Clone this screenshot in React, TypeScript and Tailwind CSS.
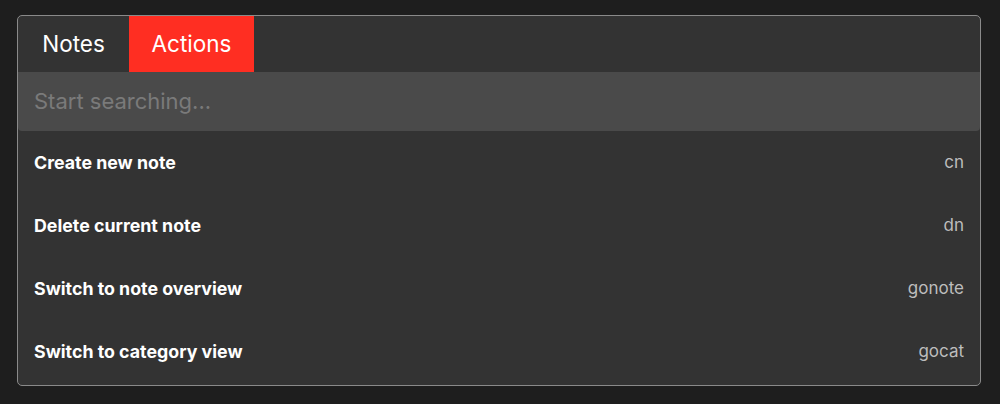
import React from 'react';

const actions = [
  { label: 'Create new note', shortcut: 'cn' },
  { label: 'Delete current note', shortcut: 'dn' },
  { label: 'Switch to note overview', shortcut: 'gonote' },
  { label: 'Switch to category view', shortcut: 'gocat' },
];

const App = () => {
  return (
    <div className="h-[404px] w-[1000px] bg-[#1e1e1e] pt-[15px] pl-[17px] font-['Inter','Liberation_Sans',sans-serif]">
      <div className="w-[964px] h-[371px] rounded-[5px] border border-[#8a8a8a] bg-[#333333] overflow-hidden flex flex-col">
        {/* Tabs */}
        <div className="flex h-[56px] shrink-0">
          <button className="w-[111px] text-[22.5px] text-white">Notes</button>
          <button className="w-[125px] text-[22.5px] text-white bg-[#ff2e22]">Actions</button>
        </div>

        {/* Search */}
        <div className="h-[59px] shrink-0 bg-[#4a4a4a] rounded-b-[4px] flex items-center px-[16px]">
          <input
            placeholder="Start searching..."
            className="w-full bg-transparent outline-none text-[22px] text-white placeholder:text-[#7a7a7a]"
          />
        </div>

        {/* Action list */}
        <div className="flex flex-col">
          {actions.map((a) => (
            <div key={a.shortcut} className="h-[63px] flex items-center justify-between px-[16px] pt-[1px]">
              <span className="text-[17.8px] font-bold text-white">{a.label}</span>
              <span className="text-[17px] text-[#bdbdbd]">{a.shortcut}</span>
            </div>
          ))}
        </div>
      </div>
    </div>
  );
};

export default App;
